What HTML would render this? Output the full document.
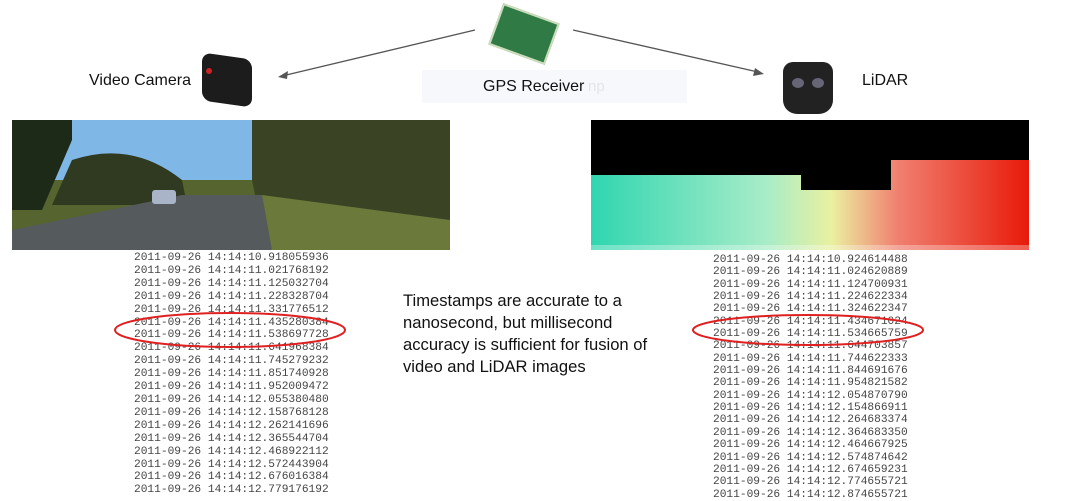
<!DOCTYPE html>
<html><head><meta charset="utf-8"><style>
body{margin:0;width:1087px;height:499px;background:#fff;position:relative;overflow:hidden;font-family:"Liberation Sans",sans-serif}
.a{position:absolute}
.ts{position:absolute;font-family:"Liberation Mono",monospace;font-size:11.2px;color:#444;white-space:pre;letter-spacing:0}
.lbl{position:absolute;font-size:16px;color:#111}
</style></head><body>
<div class="a" style="left:422px;top:70px;width:265px;height:33px;background:#f6f8fc"></div>
<span class="a" style="left:588px;top:78px;font-size:15px;color:#e2e5ea">np</span>
<div class="lbl" style="left:89px;top:72px">Video Camera</div>
<div class="lbl" style="left:483px;top:78px">GPS Receiver</div>
<div class="lbl" style="left:862px;top:72px">LiDAR</div>
<!-- camera -->
<div class="a" style="left:202px;top:56px;width:50px;height:48px;background:#1c1c1c;border-radius:9px;transform:skewY(8deg)"></div>
<div class="a" style="left:206px;top:68px;width:6px;height:6px;background:#c22;border-radius:50%"></div>
<!-- gps -->
<div class="a" style="left:494px;top:12px;width:56px;height:40px;background:#2f7a45;transform:rotate(20deg);border:2px solid #cdb"></div>
<!-- lidar -->
<div class="a" style="left:783px;top:62px;width:50px;height:52px;background:#222;border-radius:10px 10px 14px 14px"></div>
<div class="a" style="left:792px;top:78px;width:12px;height:10px;background:#667;border-radius:50%"></div>
<div class="a" style="left:812px;top:78px;width:12px;height:10px;background:#667;border-radius:50%"></div>
<svg class="a" style="left:0;top:0" width="1087" height="499">
<line x1="475" y1="30" x2="282" y2="76" stroke="#555" stroke-width="1.3"/>
<polygon points="278,77 288,71 287,79" fill="#555"/>
<line x1="573" y1="30" x2="758" y2="72" stroke="#555" stroke-width="1.3"/>
<polygon points="764,74 753,76 755,68" fill="#555"/>
</svg>
<!-- road photo -->
<svg class="a" style="left:12px;top:120px" width="438" height="130">
<rect width="438" height="130" fill="#56652f"/>
<rect x="20" y="0" width="240" height="60" fill="#7fb8e6"/>
<path d="M0 0H60V20L30 90H0Z" fill="#1e2a18"/>
<path d="M60 40Q120 20 170 60L175 85H40Z" fill="#2f3a20"/>
<path d="M240 0H438V110H250L240 60Z" fill="#3a4424"/>
<path d="M0 110L170 75H250L260 130H0Z" fill="#555a5c"/>
<path d="M250 75L438 100V130H260Z" fill="#6b7a3a"/>
<rect x="140" y="70" width="24" height="14" fill="#aab4c8" rx="3"/>
</svg>
<!-- lidar image -->
<svg class="a" style="left:591px;top:120px" width="438" height="130">
<defs><linearGradient id="g" x1="0" x2="1"><stop offset="0" stop-color="#2fd6b0"/><stop offset=".4" stop-color="#a8ecc8"/><stop offset=".55" stop-color="#eaf0a0"/><stop offset=".7" stop-color="#f08070"/><stop offset="1" stop-color="#e81a0a"/></linearGradient></defs>
<rect width="438" height="130" fill="url(#g)"/>
<path d="M0 0H438V40H300V70H210V55H0Z" fill="#000"/>
<rect y="125" width="438" height="5" fill="#fff" opacity=".3"/>
</svg>
<div class="ts" style="left:134px;top:252px;line-height:12.9px">2011-09-26 14:14:10.918055936
2011-09-26 14:14:11.021768192
2011-09-26 14:14:11.125032704
2011-09-26 14:14:11.228328704
2011-09-26 14:14:11.331776512
2011-09-26 14:14:11.435280384
2011-09-26 14:14:11.538697728
2011-09-26 14:14:11.641968384
2011-09-26 14:14:11.745279232
2011-09-26 14:14:11.851740928
2011-09-26 14:14:11.952009472
2011-09-26 14:14:12.055380480
2011-09-26 14:14:12.158768128
2011-09-26 14:14:12.262141696
2011-09-26 14:14:12.365544704
2011-09-26 14:14:12.468922112
2011-09-26 14:14:12.572443904
2011-09-26 14:14:12.676016384
2011-09-26 14:14:12.779176192</div>
<div class="ts" style="left:713px;top:254px;line-height:12.35px">2011-09-26 14:14:10.924614488
2011-09-26 14:14:11.024620889
2011-09-26 14:14:11.124700931
2011-09-26 14:14:11.224622334
2011-09-26 14:14:11.324622347
2011-09-26 14:14:11.434671024
2011-09-26 14:14:11.534665759
2011-09-26 14:14:11.644703857
2011-09-26 14:14:11.744622333
2011-09-26 14:14:11.844691676
2011-09-26 14:14:11.954821582
2011-09-26 14:14:12.054870790
2011-09-26 14:14:12.154866911
2011-09-26 14:14:12.264683374
2011-09-26 14:14:12.364683350
2011-09-26 14:14:12.464667925
2011-09-26 14:14:12.574874642
2011-09-26 14:14:12.674659231
2011-09-26 14:14:12.774655721
2011-09-26 14:14:12.874655721</div>
<svg class="a" style="left:0;top:0" width="1087" height="499">
<ellipse cx="230" cy="330" rx="115" ry="17" fill="none" stroke="#e02020" stroke-width="2"/>
<ellipse cx="808" cy="330" rx="115" ry="15" fill="none" stroke="#e02020" stroke-width="2"/>
</svg>
<div class="a" style="left:403px;top:290px;font-size:16.6px;line-height:22px;color:#111">Timestamps are accurate to a<br>nanosecond, but millisecond<br>accuracy is sufficient for fusion of<br>video and LiDAR images</div>
</body></html>
